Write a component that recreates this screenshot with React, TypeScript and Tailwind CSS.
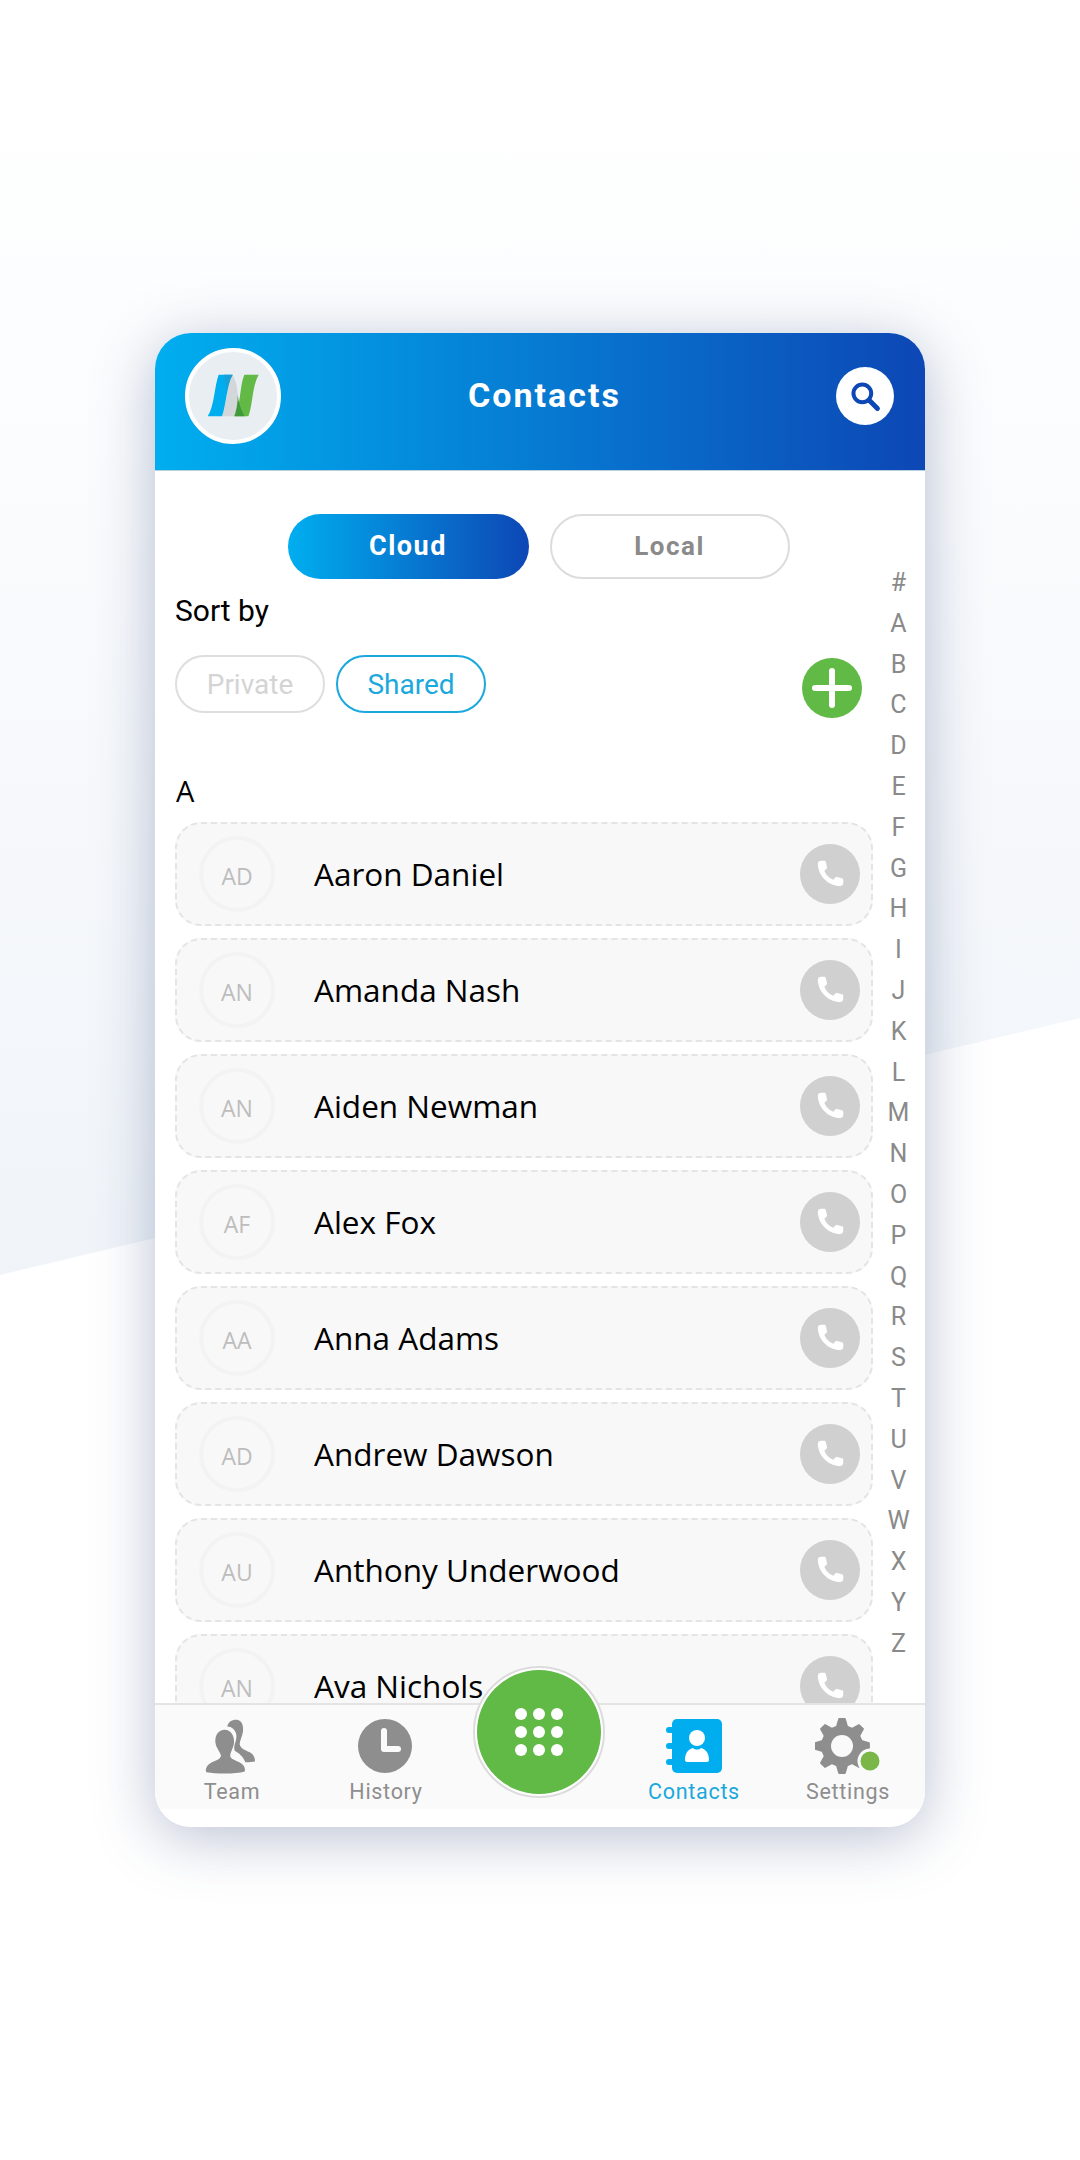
const letters = "#ABCDEFGHIJKLMNOPQRSTUVWXYZ".split("");

const contacts = [
  { initials: "AD", name: "Aaron Daniel" },
  { initials: "AN", name: "Amanda Nash" },
  { initials: "AN", name: "Aiden Newman" },
  { initials: "AF", name: "Alex Fox" },
  { initials: "AA", name: "Anna Adams" },
  { initials: "AD", name: "Andrew Dawson" },
  { initials: "AU", name: "Anthony Underwood" },
  { initials: "AN", name: "Ava Nichols" },
];

function gearPath(cx: number, cy: number, outer: number, inner: number, teeth: number) {
  const points: string[] = [];
  const step = (Math.PI * 2) / teeth;
  for (let i = 0; i < teeth; i++) {
    const a = i * step - Math.PI / 2;
    const corners: [number, number][] = [
      [a - step * 0.32, inner],
      [a - step * 0.13, outer],
      [a + step * 0.13, outer],
      [a + step * 0.32, inner],
    ];
    corners.forEach(([angle, r]) => {
      points.push(`${(cx + Math.cos(angle) * r).toFixed(1)} ${(cy + Math.sin(angle) * r).toFixed(1)}`);
    });
  }
  return `M${points.join("L")}Z`;
}

function Logo() {
  return (
    <svg viewBox="110 125 165 135" className="h-[45px] w-[55px]">
      <path d="M190 130C208 165 210 205 196 255H158C172 225 170 160 190 130Z" fill="#d3d7d9" />
      <path d="M148 130H190C172 160 170 225 158 255H115C135 225 135 165 148 130Z" fill="#00aeef" />
      <path d="M165 130H190C180 145 175 165 172 185C170 165 168 145 165 130Z" fill="#1b9dd6" />
      <path d="M225 130H268C248 165 250 225 237 255H195C215 225 210 165 225 130Z" fill="#62b946" />
      <path d="M205 190C205 220 200 240 195 255H226C215 235 208 215 205 190Z" fill="#3f9a3a" />
    </svg>
  );
}

function PhoneGlyph() {
  return (
    <svg viewBox="0 0 30 30" className="size-[33px]">
      <path
        d="M6.500 2.500h2.700c.9 0 1.400.5 1.600 1.300l1 4.300c.2.800 0 1.300-.6 1.800L9.400 11.500c1.500 3.800 4.300 6.700 8.100 8.300l1.600-1.900c.5-.6 1.100-.8 1.900-.6l4.300 1c.8.200 1.300.7 1.300 1.600v2.700c0 1.700-1 2.900-2.700 2.900C13 25.500 3.500 16 3.500 5.200c0-1.700 1.300-2.700 3-2.700z"
        fill="#fff"
      />
    </svg>
  );
}

function ContactRow({ initials, name }: { initials: string; name: string }) {
  return (
    <div className="flex h-[104px] shrink-0 items-center rounded-[26px] border-2 border-dashed border-[#e4e4e4] bg-[#f8f8f8] pl-[22px] pr-[11px]">
      <div className="flex size-[76px] shrink-0 items-center justify-center rounded-full border-[4px] border-[#f3f3f3] pt-[5px] font-['Open_Sans'] text-[23px] text-[#bdbdbd]">
        {initials}
      </div>
      <div className="ml-[39px] flex-1 font-['Open_Sans'] text-[31.500px] text-black">{name}</div>
      <div className="flex size-[60px] items-center justify-center rounded-full bg-[#d0d0d0]">
        <PhoneGlyph />
      </div>
    </div>
  );
}

function TeamIcon() {
  return (
    <svg viewBox="70 50 165 170" className="mr-[3px] h-[57px] w-[55px]" fill="#8e8e8e">
      <path d="M170 55C185 55 192 70 190 90C188 105 180 118 180 128C182 140 195 145 210 152C222 158 226 168 226 180C215 182 205 183 197 182C190 165 178 155 165 148C160 130 172 120 170 100C168 85 155 75 143 75C145 63 155 55 170 55Z" />
      <path d="M135 85C155 85 165 105 163 125C161 140 150 155 152 165C155 175 175 178 188 188C196 195 197 205 195 210C170 218 110 218 80 212C76 205 80 192 92 185C105 178 122 175 124 163C122 150 108 140 107 120C106 100 118 85 135 85Z" />
    </svg>
  );
}

function HistoryIcon() {
  return (
    <svg viewBox="0 0 54 54" className="mr-[2px] size-[54px]">
      <circle cx="27" cy="27" r="27" fill="#8e8e8e" />
      <path d="M26 12v18h14" stroke="#fafafa" strokeWidth="6" strokeLinecap="round" strokeLinejoin="round" fill="none" />
    </svg>
  );
}

function ContactsIcon() {
  return (
    <svg viewBox="0 0 56 54" className="h-[54px] w-[56px]">
      <rect x="6" y="0" width="50" height="54" rx="5" fill="#00aeef" />
      <rect x="0" y="8" width="11" height="6" rx="3" fill="#00aeef" />
      <rect x="0" y="24" width="11" height="6" rx="3" fill="#00aeef" />
      <rect x="0" y="40" width="11" height="6" rx="3" fill="#00aeef" />
      <circle cx="31" cy="19" r="8" fill="#fff" />
      <path d="M19 41c0-8 4-11 8-12 2 2 6 2 8 0 4 1 8 4 8 12 0 1-1 2-2 2H21c-1 0-2-1-2-2z" fill="#fff" />
    </svg>
  );
}

function SettingsIcon() {
  return (
    <svg viewBox="0 0 66 56" className="h-[56px] w-[66px]">
      <path
        d={gearPath(27, 28, 27, 20, 8)}
        fill="#8e8e8e"
        stroke="#8e8e8e"
        strokeWidth="2"
        strokeLinejoin="round"
      />
      <circle cx="27" cy="28" r="11" fill="#fafafa" />
      <circle cx="55" cy="43" r="11" fill="#7ab648" stroke="#fafafa" strokeWidth="3" />
    </svg>
  );
}

function NavItem({ label, active, children }: { label: string; active?: boolean; children: React.ReactNode }) {
  return (
    <div className="flex flex-col items-center">
      <div className="flex h-[56px] items-center">{children}</div>
      <div
        className={`mt-[5px] font-['Roboto'] text-[21.500px] leading-[26px] tracking-[0.700px] ${active ? "text-[#1ba8dc]" : "text-[#8e8e8e]"}`}
      >
        {label}
      </div>
    </div>
  );
}

export default function App() {
  return (
    <div className="relative h-[2160px] w-[1080px] overflow-hidden bg-white pl-[155px] pt-[333px]">
      {/* page backdrop */}
      <div className="absolute inset-0 bg-[linear-gradient(to_bottom,#ffffff_3%,#fcfdfe_15%,#f0f4f9_60%)] [clip-path:polygon(0_0,100%_0,100%_1018px,0_1275px)]" />

      <div className="relative flex h-[1494px] w-[770px] flex-col overflow-hidden rounded-[36px] bg-white shadow-[0_10px_60px_rgba(60,80,130,0.36)]">
        <div className="flex h-[138px] shrink-0 items-center justify-between border-b border-[#b9cfe2] bg-[linear-gradient(to_right,#00aeef,#0d47b5)] pb-[12px] pl-[30px] pr-[31px]">
          <div className="flex size-[96px] items-center justify-center rounded-full border-[4px] border-white bg-[#e8eef1]">
            <Logo />
          </div>
          <div className="mr-[28px] font-['Roboto'] text-[34px] font-bold tracking-[2px] text-white">Contacts</div>
          <div className="flex size-[58px] items-center justify-center rounded-full bg-white">
            <svg viewBox="0 0 36 36" className="size-[32px]" fill="none">
              <circle cx="15" cy="15" r="10" stroke="#0d47b5" strokeWidth="4.500" />
              <path d="M23 23l9 9" stroke="#0d47b5" strokeWidth="5.500" strokeLinecap="round" />
            </svg>
          </div>
        </div>

        <div className="flex min-h-0 flex-1">
          <div className="flex w-[718px] shrink-0 flex-col pl-[20px]">
            <div className="mt-[43px] flex justify-center gap-[21px] pl-[29px]">
              <div className="flex h-[65px] w-[241px] items-center justify-center rounded-full bg-[linear-gradient(to_right,#00aeef,#0d47b5)] font-['Roboto'] text-[27px] font-bold tracking-[1.500px] text-white">
                Cloud
              </div>
              <div className="flex h-[65px] w-[240px] items-center justify-center rounded-full border-2 border-[#dcdcdc] font-['Roboto'] text-[26px] font-bold tracking-[1.500px] text-[#8a8a8a]">
                Local
              </div>
            </div>
            <div className="mt-[14px] font-['Roboto'] text-[30px] leading-[36px] text-black">Sort by</div>
            <div className="mt-[26px] flex items-start gap-[11px]">
              <div className="flex h-[58px] w-[150px] items-center justify-center rounded-full border-2 border-[#dedede] pt-[2px] font-['Roboto'] text-[28px] text-[#d4d4d4]">
                Private
              </div>
              <div className="flex h-[58px] w-[150px] items-center justify-center rounded-full border-2 border-[#1ba8dc] pt-[2px] font-['Roboto'] text-[28px] text-[#1ba8dc]">
                Shared
              </div>
              <div className="ml-auto mr-[11px] mt-[3px] flex size-[60px] items-center justify-center rounded-full bg-[#61b946]">
                <svg viewBox="0 0 40 40" className="size-[40px]">
                  <path d="M20 3v34M3 20h34" stroke="#fff" strokeWidth="6" strokeLinecap="round" />
                </svg>
              </div>
            </div>
            <div className="ml-[1px] mt-[54px] font-['Open_Sans'] text-[29px] leading-[38px] text-black">A</div>
            <div className="mt-[12px] flex w-[698px] flex-col gap-[12px]">
              {contacts.map((contact) => (
                <ContactRow key={contact.name} initials={contact.initials} name={contact.name} />
              ))}
            </div>
          </div>
          <div className="flex flex-1 flex-col items-center pr-[1px] pt-[92px]">
            {letters.map((letter) => (
              <div key={letter} className="h-[40.800px] font-['Roboto'] text-[25px] leading-[40.800px] text-[#8a8a8a]">
                {letter}
              </div>
            ))}
          </div>
        </div>

        <div className="relative z-10 h-[124px] shrink-0 border-t-2 border-[#e4e4e4] bg-white">
          <div className="grid h-[104px] grid-cols-5 bg-[#fafafa] pt-[13px]">
            <NavItem label="Team">
              <TeamIcon />
            </NavItem>
            <NavItem label="History">
              <HistoryIcon />
            </NavItem>
            <div />
            <NavItem label="Contacts" active>
              <ContactsIcon />
            </NavItem>
            <NavItem label="Settings">
              <SettingsIcon />
            </NavItem>
          </div>
          <div className="absolute left-[318px] top-[-39px] flex size-[132px] items-center justify-center rounded-full border-2 border-[#dcdcdc] bg-white">
            <div className="grid size-[124px] grid-cols-3 content-center justify-items-center gap-x-[6px] gap-y-[6px] rounded-full bg-[#61b946] px-[38px]">
              {Array.from({ length: 9 }).map((_, i) => (
                <div key={i} className="size-[12px] rounded-full bg-white" />
              ))}
            </div>
          </div>
        </div>
      </div>
    </div>
  );
}
